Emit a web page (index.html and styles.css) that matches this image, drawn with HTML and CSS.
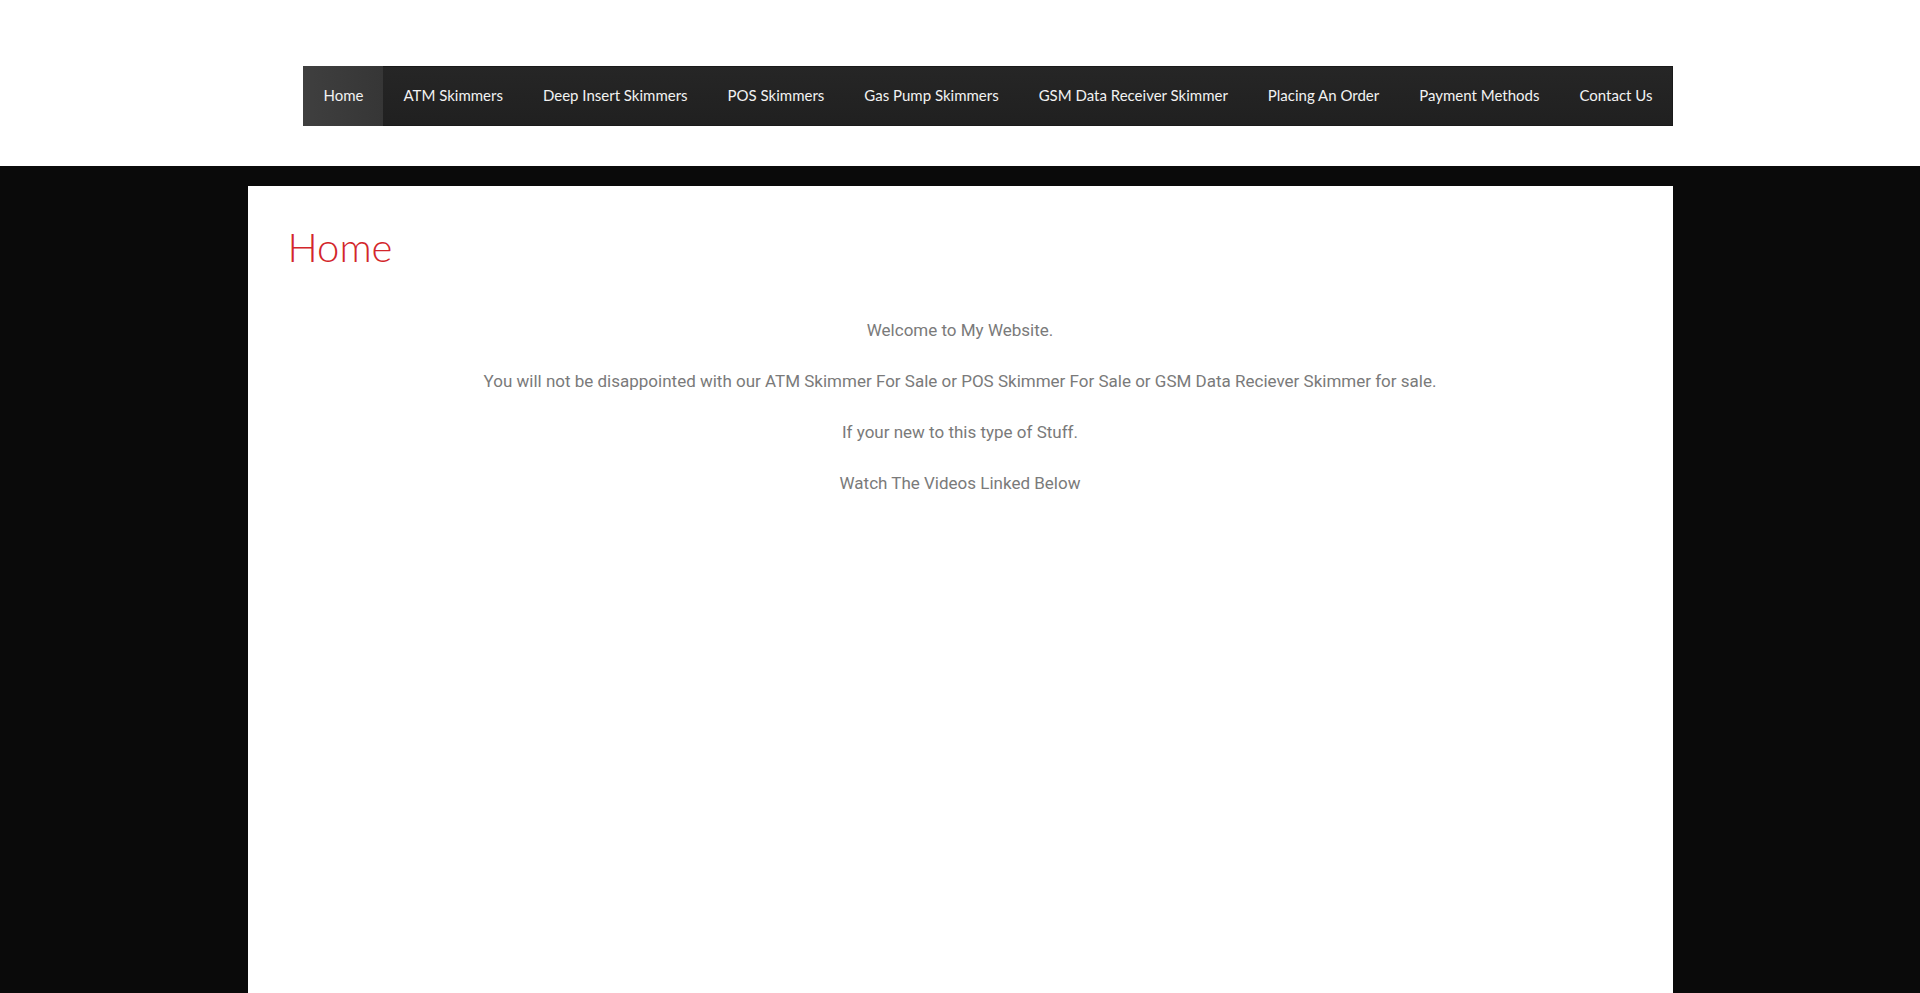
FILE: index.html
```html
<!DOCTYPE html>
<html lang="en">
<head>
<meta charset="utf-8">
<title>Home</title>
<link rel="stylesheet" href="styles.css">
</head>
<body>
<header class="site-header">
  <div class="header-inner">
    <nav class="menu">
      <a class="menu-item active" href="#">Home</a>
      <a class="menu-item" href="#">ATM Skimmers</a>
      <a class="menu-item" href="#">Deep Insert Skimmers</a>
      <a class="menu-item" href="#">POS Skimmers</a>
      <a class="menu-item" href="#">Gas Pump Skimmers</a>
      <a class="menu-item" href="#">GSM Data Receiver Skimmer</a>
      <a class="menu-item" href="#">Placing An Order</a>
      <a class="menu-item" href="#">Payment Methods</a>
      <a class="menu-item" href="#">Contact Us</a>
    </nav>
  </div>
</header>
<main class="page">
  <h1 class="page-title">Home</h1>
  <div class="content">
    <p>Welcome to My Website.</p>
    <p>You will not be disappointed with our ATM Skimmer For Sale or POS Skimmer For Sale or GSM Data Reciever Skimmer for sale.</p>
    <p>If your new to this type of Stuff.</p>
    <p>Watch The Videos Linked Below</p>
  </div>
</main>
</body>
</html>
```

FILE: styles.css
```css
html, body {
  margin: 0;
  padding: 0;
}
body {
  background: #0a0a0a;
  height: 993px;
  overflow: hidden;
}
.site-header {
  background: #ffffff;
  height: 166px;
}
.header-inner {
  width: 1425px;
  margin: 0 auto;
  padding-top: 66px;
  display: flex;
  justify-content: flex-end;
}
.menu {
  display: flex;
  height: 60px;
  background: linear-gradient(#262626, #202020);
  box-shadow: inset 0 0 0 1px #1a1a1a;
}
.menu-item {
  display: block;
  padding: 0 20px 2px;
  line-height: 58px;
  font-family: Lato, "Liberation Sans", sans-serif;
  font-size: 15px;
  color: #f2f2f2;
  text-decoration: none;
  white-space: nowrap;
}
.menu-item.active {
  background: linear-gradient(90deg, #3f3f3f, #363636);
}
.page {
  width: 1425px;
  margin: 20px auto 0;
  background: #ffffff;
  min-height: 807px;
  box-sizing: border-box;
  padding: 37px 40px 0 40px;
}
.page-title {
  margin: 0;
  font-family: Lato, "Liberation Sans", sans-serif;
  font-weight: 300;
  font-size: 40px;
  line-height: 48px;
  color: #d3262b;
}
.content {
  padding-top: 22px;
  text-align: center;
  font-family: Roboto, "Liberation Sans", sans-serif;
  font-size: 17px;
  line-height: 27px;
  color: #7a7a7a;
}
.content p {
  margin: 24px 0;
}
```
